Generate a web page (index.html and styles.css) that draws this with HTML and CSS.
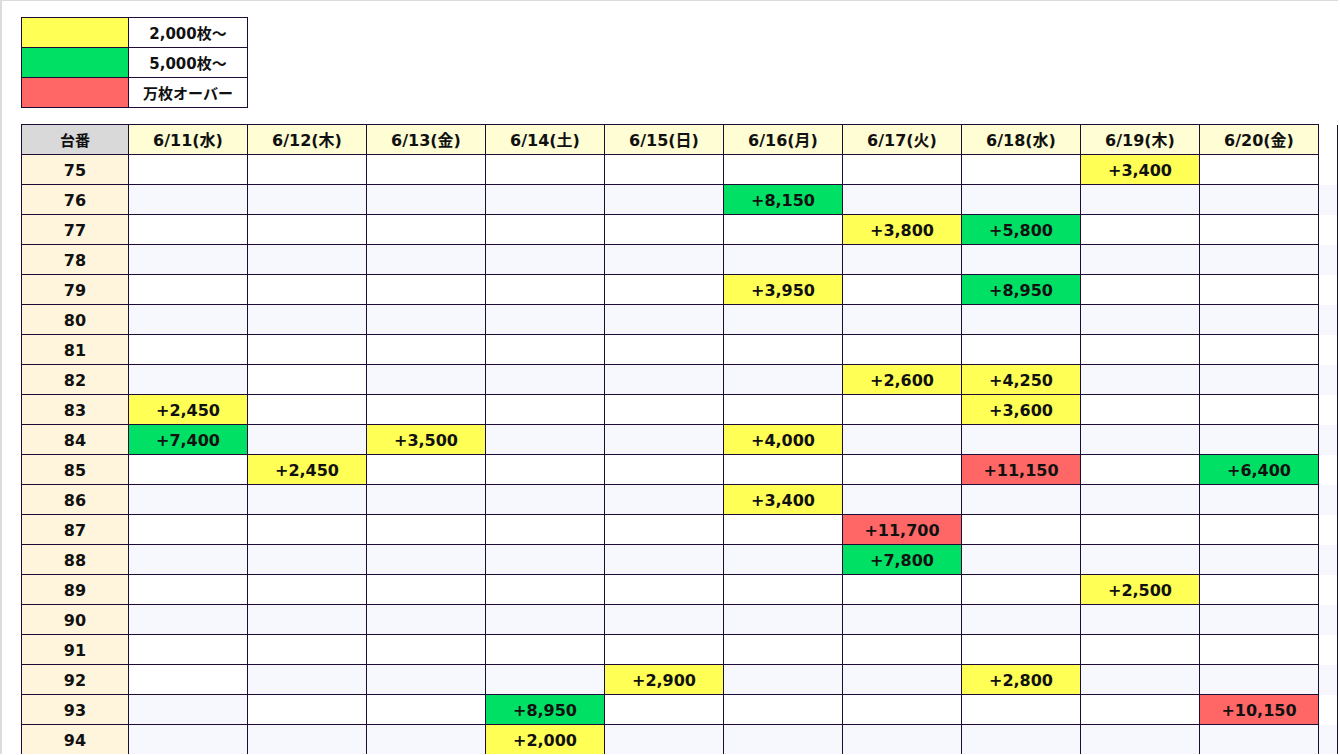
FILE: index.html
```html
<!DOCTYPE html>
<html lang="ja">
<head>
<meta charset="utf-8">
<link rel="stylesheet" href="styles.css">
</head>
<body>
<div class="frame">
  <table class="legend">
    <tr><td class="sw y"></td><td class="lbl">2,000枚〜</td></tr>
    <tr><td class="sw g"></td><td class="lbl">5,000枚〜</td></tr>
    <tr><td class="sw r"></td><td class="lbl">万枚オーバー</td></tr>
  </table>
  <table class="grid">
    <colgroup>
      <col class="c-no"><col class="c-d"><col class="c-d"><col class="c-d"><col class="c-d"><col class="c-d"><col class="c-d"><col class="c-d"><col class="c-d"><col class="c-d"><col class="c-d"><col class="c-f">
    </colgroup>
    <thead>
      <tr><th class="h-no">台番</th><th>6/11(水)</th><th>6/12(木)</th><th>6/13(金)</th><th>6/14(土)</th><th>6/15(日)</th><th>6/16(月)</th><th>6/17(火)</th><th>6/18(水)</th><th>6/19(木)</th><th>6/20(金)</th><th class="f"></th></tr>
    </thead>
    <tbody>
      <tr><td class="no">75</td><td></td><td></td><td></td><td></td><td></td><td></td><td></td><td></td><td class="y">+3,400</td><td></td><td class="f"></td></tr>
      <tr><td class="no">76</td><td></td><td></td><td></td><td></td><td></td><td class="g">+8,150</td><td></td><td></td><td></td><td></td><td class="f"></td></tr>
      <tr><td class="no">77</td><td></td><td></td><td></td><td></td><td></td><td></td><td class="y">+3,800</td><td class="g">+5,800</td><td></td><td></td><td class="f"></td></tr>
      <tr><td class="no">78</td><td></td><td></td><td></td><td></td><td></td><td></td><td></td><td></td><td></td><td></td><td class="f"></td></tr>
      <tr><td class="no">79</td><td></td><td></td><td></td><td></td><td></td><td class="y">+3,950</td><td></td><td class="g">+8,950</td><td></td><td></td><td class="f"></td></tr>
      <tr><td class="no">80</td><td></td><td></td><td></td><td></td><td></td><td></td><td></td><td></td><td></td><td></td><td class="f"></td></tr>
      <tr><td class="no">81</td><td></td><td></td><td></td><td></td><td></td><td></td><td></td><td></td><td></td><td></td><td class="f"></td></tr>
      <tr><td class="no">82</td><td></td><td class="w"></td><td></td><td></td><td></td><td></td><td class="y">+2,600</td><td class="y">+4,250</td><td></td><td></td><td class="f"></td></tr>
      <tr><td class="no">83</td><td class="y">+2,450</td><td></td><td></td><td></td><td></td><td></td><td></td><td class="y">+3,600</td><td></td><td></td><td class="f"></td></tr>
      <tr><td class="no">84</td><td class="g">+7,400</td><td></td><td class="y">+3,500</td><td></td><td></td><td class="y">+4,000</td><td></td><td></td><td></td><td></td><td class="f"></td></tr>
      <tr><td class="no">85</td><td></td><td class="y">+2,450</td><td></td><td></td><td></td><td></td><td></td><td class="r">+11,150</td><td></td><td class="g">+6,400</td><td class="f"></td></tr>
      <tr><td class="no">86</td><td></td><td></td><td></td><td></td><td></td><td class="y">+3,400</td><td></td><td></td><td></td><td></td><td class="f"></td></tr>
      <tr><td class="no">87</td><td></td><td></td><td></td><td></td><td></td><td></td><td class="r">+11,700</td><td></td><td></td><td></td><td class="f"></td></tr>
      <tr><td class="no">88</td><td></td><td></td><td></td><td></td><td></td><td></td><td class="g">+7,800</td><td></td><td></td><td></td><td class="f"></td></tr>
      <tr><td class="no">89</td><td></td><td></td><td></td><td></td><td></td><td></td><td></td><td></td><td class="y">+2,500</td><td></td><td class="f"></td></tr>
      <tr><td class="no">90</td><td></td><td></td><td></td><td></td><td></td><td></td><td></td><td></td><td></td><td></td><td class="f"></td></tr>
      <tr><td class="no">91</td><td></td><td></td><td></td><td></td><td></td><td></td><td></td><td></td><td></td><td></td><td class="f"></td></tr>
      <tr><td class="no">92</td><td class="w"></td><td></td><td></td><td></td><td class="y">+2,900</td><td></td><td></td><td class="y">+2,800</td><td></td><td></td><td class="f"></td></tr>
      <tr><td class="no">93</td><td class="l"></td><td></td><td></td><td class="g">+8,950</td><td></td><td></td><td></td><td></td><td></td><td class="r">+10,150</td><td class="f"></td></tr>
      <tr><td class="no">94</td><td></td><td></td><td></td><td class="y">+2,000</td><td></td><td></td><td></td><td></td><td></td><td></td><td class="f"></td></tr>
    </tbody>
  </table>
</div>
</body>
</html>
```

FILE: styles.css
```css
html, body {
  margin: 0;
  padding: 0;
  background: #ffffff;
  overflow: hidden;
}
body {
  font-family: "DejaVu Sans", "Noto Sans CJK JP", sans-serif;
  font-weight: 700;
  font-size: 16px;
  color: #111;
}
.frame {
  width: 1338px;
  height: 754px;
  box-sizing: border-box;
  border-left: 2px solid #dcdcdc;
  border-top: 1px solid #dcdcdc;
  padding: 16px 0 0 19px;
  overflow: hidden;
}
table {
  border-collapse: collapse;
  table-layout: fixed;
}
.legend {
  width: 227px;
  margin-bottom: 16px;
}
.legend td {
  border: 1px solid #1e0b36;
  height: 29px;
  padding: 0;
  text-align: center;
  font-size: 15px;
}
.legend .sw { width: 106px; }
.legend .lbl { width: 118px; background: #fff; }

.grid {
  width: 1317px;
}
.c-no { width: 107px; }
.c-d { width: 119px; }
.c-f { width: 19px; }
.grid th, .grid td {
  border: 1px solid #1e0b36;
  padding: 0;
  text-align: center;
  font-size: 16px;
  white-space: nowrap;
}
.grid td {
  height: 28px;
  padding-top: 1px;
}
.grid th {
  background: #fffdd3;
  font-weight: 700;
  padding-bottom: 1px;
  height: 28px;
}
.grid th.h-no {
  background: #d9d9d9;
  font-size: 15px;
}
.grid tbody tr:nth-child(even) td { background: #f7f8fd; }
.grid tbody tr td.w { background: #ffffff; }
.grid tbody tr td.l { background: #f7f8fd; }
.grid td.no, .grid tbody tr:nth-child(even) td.no { background: #fff5dc; }
.grid th.f {
  background: #fff;
  border-top: none;
  border-bottom: none;
}
.grid td.f {
  border-top: none;
  border-bottom: none;
}
.y, .grid tbody tr td.y { background: #ffff55; }
.g, .grid tbody tr td.g { background: #00e064; }
.r, .grid tbody tr td.r { background: #ff6767; }
```
